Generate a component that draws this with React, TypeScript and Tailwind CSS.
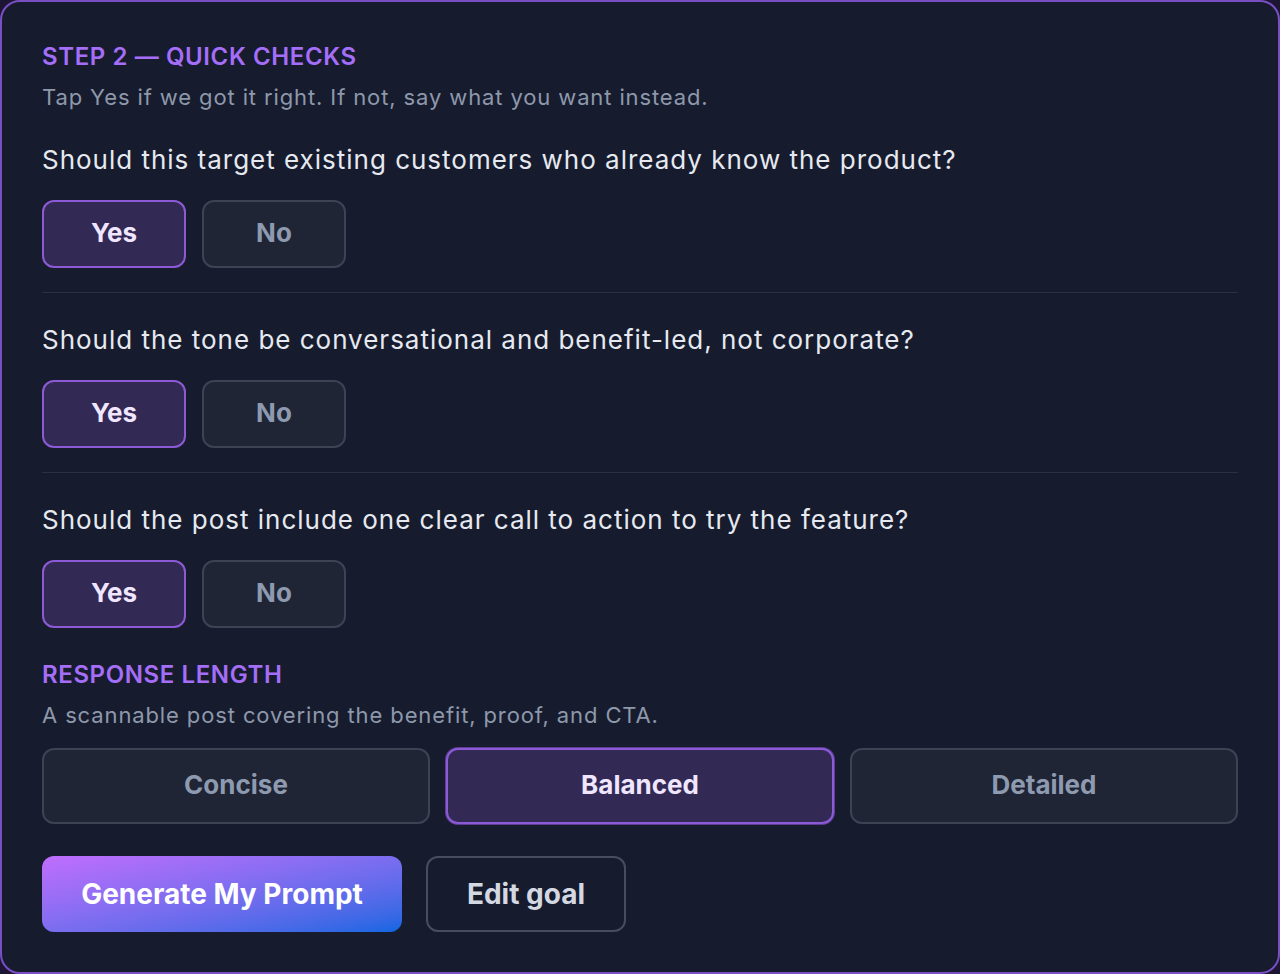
import { useState } from "react";

const questions = [
  "Should this target existing customers who already know the product?",
  "Should the tone be conversational and benefit-led, not corporate?",
  "Should the post include one clear call to action to try the feature?",
];

const lengths = ["Concise", "Balanced", "Detailed"];

export default function App() {
  const [answers, setAnswers] = useState<boolean[]>([true, true, true]);
  const [length, setLength] = useState("Balanced");

  return (
    <div
      className="w-[1280px] h-[974px] bg-[#1c1533]"
      style={{ fontFamily: "Inter, 'Noto Sans', sans-serif" }}
    >
      <div className="h-full rounded-[20px] border-2 border-[#7b4fc4] bg-[#161c2e] px-10 pt-[39px]">
        {/* header */}
        <h2 className="text-[24px] leading-[32px] font-semibold tracking-[0.025em] text-[#a56ef8]">
          STEP 2 — QUICK CHECKS
        </h2>
        <p className="mt-[9px] text-[22px] leading-[30px] tracking-[0.04em] text-[#8e98ab]">
          Tap Yes if we got it right. If not, say what you want instead.
        </p>

        {/* questions */}
        <div className="mt-[30px] flex flex-col">
          {questions.map((q, i) => (
            <div
              key={q}
              className={
                i < questions.length - 1
                  ? "pb-6 border-b border-[#2a3142] mb-[29px]"
                  : ""
              }
            >
              <p className="text-[26px] leading-[36px] tracking-[0.038em] text-[#e6e9f0]">
                {q}
              </p>
              <div className="mt-[22px] flex gap-4">
                <button
                  onClick={() =>
                    setAnswers((a) => a.map((v, j) => (j === i ? true : v)))
                  }
                  className={`w-[144px] h-[68px] pb-1 rounded-[12px] border-2 text-[26px] font-bold ${
                    answers[i]
                      ? "bg-[#322a54] border-[#8d5ad6] text-[#f0e6ff]"
                      : "bg-[#1f2535] border-[#3d4353] text-[#8e9ab0]"
                  }`}
                >
                  Yes
                </button>
                <button
                  onClick={() =>
                    setAnswers((a) => a.map((v, j) => (j === i ? false : v)))
                  }
                  className={`w-[144px] h-[68px] pb-1 rounded-[12px] border-2 text-[26px] font-bold ${
                    !answers[i]
                      ? "bg-[#322a54] border-[#8d5ad6] text-[#f0e6ff]"
                      : "bg-[#1f2535] border-[#3d4353] text-[#8e9ab0]"
                  }`}
                >
                  No
                </button>
              </div>
            </div>
          ))}
        </div>

        {/* response length */}
        <h3 className="mt-[31px] text-[24px] leading-[32px] font-semibold tracking-[0.025em] text-[#a56ef8]">
          RESPONSE LENGTH
        </h3>
        <p className="mt-[9px] text-[22px] leading-[30px] tracking-[0.04em] text-[#8e98ab]">
          A scannable post covering the benefit, proof, and CTA.
        </p>
        <div className="mt-[18px] grid grid-cols-3 gap-4">
          {lengths.map((l) => (
            <button
              key={l}
              onClick={() => setLength(l)}
              className={`h-[76px] pb-1 rounded-[12px] border-2 text-[26px] font-bold ${
                length === l
                  ? "bg-[#322a54] border-[#8d5ad6] text-[#f0e6ff] ring-1 ring-[#5b3d94]"
                  : "bg-[#1f2535] border-[#3d4353] text-[#8e9ab0]"
              }`}
            >
              {l}
            </button>
          ))}
        </div>

        {/* actions */}
        <div className="mt-8 flex gap-6">
          <button className="w-[360px] h-[76px] rounded-[12px] bg-gradient-to-br from-[#c06dfd] to-[#0866e2] text-[28px] font-bold text-white">
            Generate My Prompt
          </button>
          <button className="w-[200px] h-[76px] rounded-[12px] border-2 border-[#474d5c] text-[28px] font-bold text-[#d3d8e2]">
            Edit goal
          </button>
        </div>
      </div>
    </div>
  );
}
